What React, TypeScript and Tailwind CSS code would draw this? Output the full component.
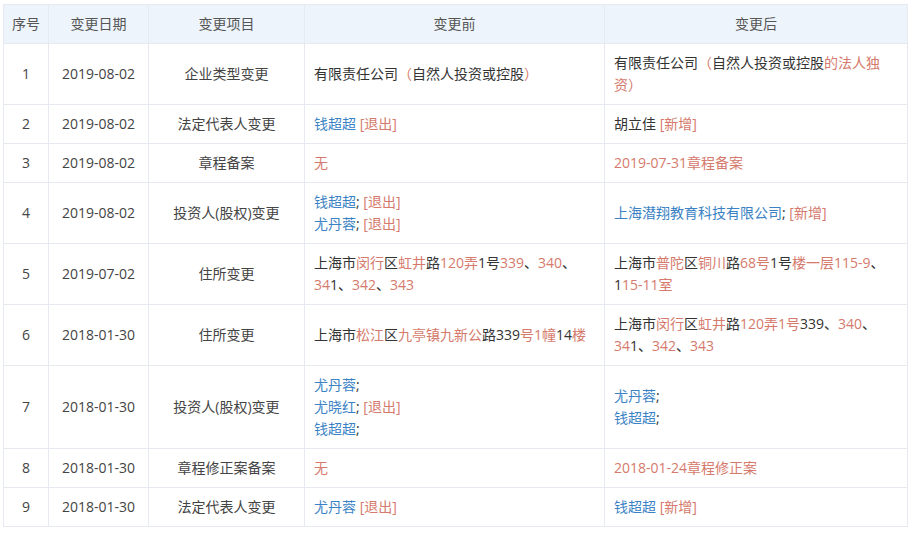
type Seg = [string, 'k' | 'r' | 'b'];

const colorOf = { k: 'text-[#333]', r: 'text-[#d57a6c]', b: 'text-[#3a82c4]' };

const Line = ({ segs }: { segs: Seg[] }) => (
  <div>
    {segs.map(([t, c], i) => (
      <span key={i} className={colorOf[c]}>
        {t}
      </span>
    ))}
  </div>
);

const Cell = ({ lines }: { lines: Seg[][] }) => (
  <td className="border border-[#e6eaf0] px-[9px] py-[8px] text-left align-middle">
    {lines.map((l, i) => (
      <Line key={i} segs={l} />
    ))}
  </td>
);

const rows: { no: number; date: string; item: string; before: Seg[][]; after: Seg[][] }[] = [
  {
    no: 1,
    date: '2019-08-02',
    item: '企业类型变更',
    before: [[['有限责任公司', 'k'], ['（', 'r'], ['自然人投资或控股', 'k'], ['）', 'r']]],
    after: [
      [['有限责任公司', 'k'], ['（', 'r'], ['自然人投资或控股', 'k'], ['的法人独', 'r']],
      [['资）', 'r']],
    ],
  },
  {
    no: 2,
    date: '2019-08-02',
    item: '法定代表人变更',
    before: [[['钱超超', 'b'], [' [退出]', 'r']]],
    after: [[['胡立佳', 'k'], [' [新增]', 'r']]],
  },
  {
    no: 3,
    date: '2019-08-02',
    item: '章程备案',
    before: [[['无', 'r']]],
    after: [[['2019-07-31章程备案', 'r']]],
  },
  {
    no: 4,
    date: '2019-08-02',
    item: '投资人(股权)变更',
    before: [
      [['钱超超', 'b'], ['; ', 'k'], ['[退出]', 'r']],
      [['尤丹蓉', 'b'], ['; ', 'k'], ['[退出]', 'r']],
    ],
    after: [[['上海潜翔教育科技有限公司', 'b'], ['; ', 'k'], ['[新增]', 'r']]],
  },
  {
    no: 5,
    date: '2019-07-02',
    item: '住所变更',
    before: [
      [['上海市', 'k'], ['闵行', 'r'], ['区', 'k'], ['虹井', 'r'], ['路', 'k'], ['120弄', 'r'], ['1号', 'k'], ['339', 'r'], ['、', 'k'], ['340', 'r'], ['、', 'k']],
      [['34', 'r'], ['1、', 'k'], ['342', 'r'], ['、', 'k'], ['343', 'r']],
    ],
    after: [
      [['上海市', 'k'], ['普陀', 'r'], ['区', 'k'], ['铜川', 'r'], ['路', 'k'], ['68号', 'r'], ['1号', 'k'], ['楼一层115-9', 'r'], ['、', 'k']],
      [['1', 'k'], ['15-11室', 'r']],
    ],
  },
  {
    no: 6,
    date: '2018-01-30',
    item: '住所变更',
    before: [
      [['上海市', 'k'], ['松江', 'r'], ['区', 'k'], ['九亭镇九新公', 'r'], ['路339', 'k'], ['号1幢', 'r'], ['14', 'k'], ['楼', 'r']],
    ],
    after: [
      [['上海市', 'k'], ['闵行', 'r'], ['区', 'k'], ['虹井', 'r'], ['路', 'k'], ['120弄1号', 'r'], ['339、', 'k'], ['340', 'r'], ['、', 'k']],
      [['34', 'r'], ['1、', 'k'], ['342', 'r'], ['、', 'k'], ['343', 'r']],
    ],
  },
  {
    no: 7,
    date: '2018-01-30',
    item: '投资人(股权)变更',
    before: [
      [['尤丹蓉', 'b'], [';', 'k']],
      [['尤晓红', 'b'], ['; ', 'k'], ['[退出]', 'r']],
      [['钱超超', 'b'], [';', 'k']],
    ],
    after: [
      [['尤丹蓉', 'b'], [';', 'k']],
      [['钱超超', 'b'], [';', 'k']],
    ],
  },
  {
    no: 8,
    date: '2018-01-30',
    item: '章程修正案备案',
    before: [[['无', 'r']]],
    after: [[['2018-01-24章程修正案', 'r']]],
  },
  {
    no: 9,
    date: '2018-01-30',
    item: '法定代表人变更',
    before: [[['尤丹蓉', 'b'], [' [退出]', 'r']]],
    after: [[['钱超超', 'b'], [' [新增]', 'r']]],
  },
];

const th = 'border border-[#e6eaf0] px-[6px] py-[8px] font-normal text-center text-[#555]';
const td = 'border border-[#e6eaf0] px-[6px] py-[8px] text-center align-middle text-[#444]';

export default function App() {
  return (
    <div className="w-[912px] h-[537px] bg-white pt-[4px] pl-[3px] font-['Open_Sans','Noto_Sans_CJK_SC',sans-serif] text-[14px] leading-[22px]">
      <table className="w-[904px] table-fixed border-collapse">
        <colgroup>
          <col className="w-[45px]" />
          <col className="w-[100px]" />
          <col className="w-[156px]" />
          <col className="w-[300px]" />
          <col className="w-[303px]" />
        </colgroup>
        <thead>
          <tr className="bg-[#eef4fb]">
            <th className={th}>序号</th>
            <th className={th}>变更日期</th>
            <th className={th}>变更项目</th>
            <th className={th}>变更前</th>
            <th className={th}>变更后</th>
          </tr>
        </thead>
        <tbody>
          {rows.map((r) => (
            <tr key={r.no}>
              <td className={td}>{r.no}</td>
              <td className={td}>{r.date}</td>
              <td className={td}>{r.item}</td>
              <Cell lines={r.before} />
              <Cell lines={r.after} />
            </tr>
          ))}
        </tbody>
      </table>
    </div>
  );
}
